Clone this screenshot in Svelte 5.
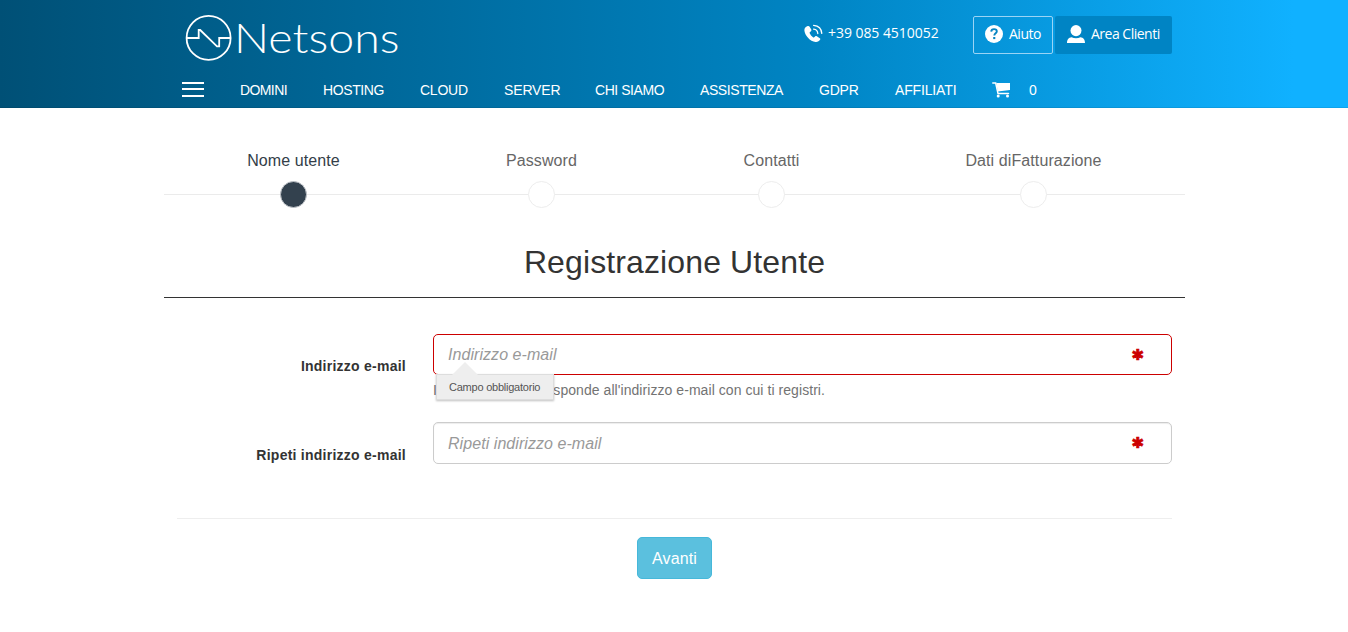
<script>
  const nav = [
    ['DOMINI', 47, -0.6], ['HOSTING', 61, -0.4], ['CLOUD', 48, -0.25], ['SERVER', 55, -0.15], ['CHI SIAMO', 69, -0.45],
    ['ASSISTENZA', 83, -0.42], ['GDPR', 40, -0.2], ['AFFILIATI', 62, -0.15]
  ];
  const steps = ['Nome utente', 'Password', 'Contatti', 'Dati diFatturazione'];
</script>

<header>
  <div class="top">
    <svg class="logo" width="216" height="50" viewBox="0 0 216 50">
      <g fill="none" stroke="#fff" stroke-width="1.8">
        <circle cx="24.6" cy="24.900" r="22" />
        <path d="M2.500 25H14.700V17H16.200L33 33.300H35.200V25H46.500" />
      </g>
      <text x="50" y="40" textLength="165.500" lengthAdjust="spacingAndGlyphs">Netsons</text>
    </svg>
    <div class="phone">
      <svg width="19" height="19" viewBox="0 0 19 19">
        <path fill="#fff" d="M3.100 2.300C1.100 3.100.3 4.600.4 6.400c.3 4.800 5.700 11 11.200 11.500 1.900.2 3.700-.7 4.500-2.100.4-.7.3-1.200-.3-1.600l-3-1.900c-.6-.4-1.200-.4-1.700.1l-.9.9c-.4.3-.8.3-1.200 0-1.500-1.100-2.600-2.500-3.300-4.100-.2-.5-.1-.9.3-1.200l1-.8c.5-.5.6-1 .3-1.600L5.600 2.700c-.5-.8-1.300-.9-2.500-.4z" />
        <g fill="none" stroke="#fff" stroke-width="1.300" stroke-linecap="round">
          <path d="M9.600 5.100c2.600.2 4 1.700 4.200 4.400M9.600 1.300c5 .4 7.900 3.300 8.200 8.100" />
        </g>
      </svg>
      <span>+39 085 4510052</span>
    </div>
    <button class="help">
      <svg width="18" height="18" viewBox="0 0 18 18">
        <circle cx="9" cy="9" r="9" fill="#fff" />
        <path d="M6.200 6.600c.1-1.700 1.200-2.500 2.800-2.500 1.700 0 2.800.9 2.800 2.300 0 1.900-2.500 2-2.500 4.200" fill="none" stroke="#0785c2" stroke-width="1.900" />
        <rect x="8.200" y="12" width="2.100" height="2.100" fill="#0785c2" />
      </svg>
      <span>Aiuto</span>
    </button>
    <button class="area">
      <svg width="18" height="18" viewBox="0 0 18 18" fill="#fff">
        <ellipse cx="9" cy="5.600" rx="5.500" ry="5.600" />
        <path d="M0 18c0-3.800 1.600-5.200 4.600-5.800 2.500 1.300 6.300 1.300 8.800 0 3 .6 4.600 2 4.600 5.800z" />
      </svg>
      <span>Area Clienti</span>
    </button>
  </div>
  <nav>
    <div class="burger"><i></i><i></i><i></i></div>
    {#each nav as [label, width, spacing]}
      <a href="#top" style="width:{width}px;letter-spacing:{spacing}px">{label}</a>
    {/each}
    <svg class="cart" width="19" height="16" viewBox="0 0 19 16">
      <path d="M.8 1H3.700L6 11.600H16.500" fill="none" stroke="#fff" stroke-width="1.500" stroke-linecap="round" />
      <path d="M4.300 1H18V8L5.800 9.600z" fill="#fff" />
      <circle cx="6.200" cy="14" r="1.500" fill="#fff" /><circle cx="15.500" cy="14" r="1.500" fill="#fff" />
    </svg>
    <span class="count">0</span>
  </nav>
</header>

<main>
  <div class="steps">
    {#each steps as step, i}
      <div class="step" class:active={i === 0}>
        <span>{step}</span>
        <div class="track"><b></b></div>
      </div>
    {/each}
  </div>
  <h1>Registrazione Utente</h1>
  <form>
    <div class="row first">
      <label for="email">Indirizzo e-mail</label>
      <div class="field">
        <div class="control">
          <input id="email" class="error" placeholder="Indirizzo e-mail" />
          <span class="star">✱</span>
        </div>
        <p><span>I</span><span>sponde all'indirizzo e-mail con cui ti registri.</span></p>
        <div class="tip">Campo obbligatorio</div>
      </div>
    </div>
    <div class="row second">
      <label for="repeat">Ripeti indirizzo e-mail</label>
      <div class="field">
        <div class="control">
          <input id="repeat" placeholder="Ripeti indirizzo e-mail" />
          <span class="star">✱</span>
        </div>
      </div>
    </div>
    <div class="actions"><button type="button">Avanti</button></div>
  </form>
</main>

<style>
  :global(body) { background: #fff; font-family: "Liberation Sans", Arial, sans-serif; font-size: 14px; line-height: 20px; color: #333; }
  header, header *, main, main * { box-sizing: border-box; }
  header { height: 108px; padding-left: 182px; color: #fff; background: linear-gradient(to right, #005076 0%, #0084c3 60%, #10b1ff 96%, #10b1ff 100%); box-shadow: inset 0 -1px 0 rgba(0,0,0,.08); }
  .top { display: flex; height: 80px; padding: 13px 0 0 2px; }
  .logo { margin-right: 404px; flex: none; overflow: visible; }
  .logo text { font-family: Lato, sans-serif; font-weight: 300; font-size: 42px; fill: #fff; }
  .phone { display: flex; width: 169px; padding-top: 11px; gap: 5px; font: 14px/20px "Open Sans", sans-serif; white-space: nowrap; }
  .phone span { letter-spacing: -.05px; margin-top: -1px; }
  button { font: inherit; color: #fff; }
  .top button { display: flex; align-items: center; height: 38px; margin-top: 3px; font: 14px/20px "Open Sans", sans-serif; white-space: nowrap; border-radius: 2px; padding: 0 0 2px 11px; }
  .help { width: 80px; border: 1px solid #9bd4f5; background: transparent; gap: 6px; }
  .top button span { letter-spacing: -.5px; }
  .top .area { width: 117px; margin-left: 2px; padding-left: 12px; border: 0; background: #0084c4; gap: 6px; }
  nav { display: flex; height: 20px; }
  .burger { width: 22px; margin-right: 36px; padding-top: 2px; display: flex; flex-direction: column; }
  .burger i { height: 2px; margin-bottom: 4px; background: #fff; }
  .burger i:last-child { margin: 1px 0 0; }
  nav a { margin-right: 36px; color: #fff; text-decoration: none; white-space: nowrap; }
  .cart { margin: 2px 18px 0 -1px; }
  main { width: 1021px; margin-left: 164px; }
  .steps { display: grid; grid-template-columns: 259px 237px 223px 301px; padding-top: 42px; font-size: 16px; color: #666; text-align: center; background: linear-gradient(#ebebeb, #ebebeb) 0 86px / 100% 1px no-repeat; }
  .step > span { display: block; height: 20px; padding-top: 1px; letter-spacing: .1px; }
  .step.active { color: #333e48; }
  .track { height: 27px; margin-top: 11px; display: flex; justify-content: center; }
  .track b { width: 27px; height: 27px; border-radius: 50%; border: 1px solid #ededed; background: #fff; }
  .active b { border-color: #bfc3c8; background: #33414e; }
  h1 { margin: 0; height: 90px; padding-top: 36px; border-bottom: 1px solid #333; font-size: 32px; letter-spacing: .12px; line-height: 36px; font-weight: 400; text-align: center; }
  form { padding: 36px 13px 0; }
  .row { display: flex; height: 96px; }
  .row.first { height: 88px; }
  label { width: 229px; padding-top: 22px; font-weight: 700; letter-spacing: .25px; text-align: right; }
  .second label { padding-top: 23px; }
  .field { position: relative; margin-left: 27px; width: 739px; }
  .control { position: relative; }
  input { display: block; width: 739px; height: 41px; padding: 0 14px; margin: 0; border: 1px solid #ccc; border-radius: 5px; box-shadow: inset 0 1px 1px rgba(0,0,0,.075); font: italic 16px "Liberation Sans", sans-serif; letter-spacing: .06px; }
  #repeat { height: 42px; padding-top: 2px; }
  input.error { border-color: #c00; box-shadow: none; }
  input::placeholder { color: #999; opacity: 1; }
  .star { position: absolute; right: 28px; top: 11px; color: #c00; font: bold 15px/20px "DejaVu Sans", sans-serif; -webkit-text-stroke: .7px #c00; }
  p { display: flex; justify-content: space-between; width: 392px; margin: 5px 0 0; color: #737373; letter-spacing: .06px; white-space: nowrap; }
  .tip { position: absolute; left: 3px; top: 40px; width: 118px; height: 26px; padding-left: 12px; border: 1px solid #ddd; background: #eee; box-shadow: 0 1px 2px rgba(0,0,0,.25); color: #555; font-size: 11px; line-height: 25px; letter-spacing: -.23px; white-space: nowrap; }
  .tip::before { content: ""; position: absolute; left: 15px; bottom: 24px; width: 26px; height: 13px; background: #eee; clip-path: polygon(50% 0, 100% 100%, 0 100%); }
  .actions { border-top: 1px solid #eee; padding-top: 18px; text-align: center; }
  .actions button { width: 75px; height: 42px; padding: 2px 0 0; border: 1px solid #46b8da; border-radius: 5px; background: #5bc0de; font-size: 16px; letter-spacing: .1px; }
</style>
